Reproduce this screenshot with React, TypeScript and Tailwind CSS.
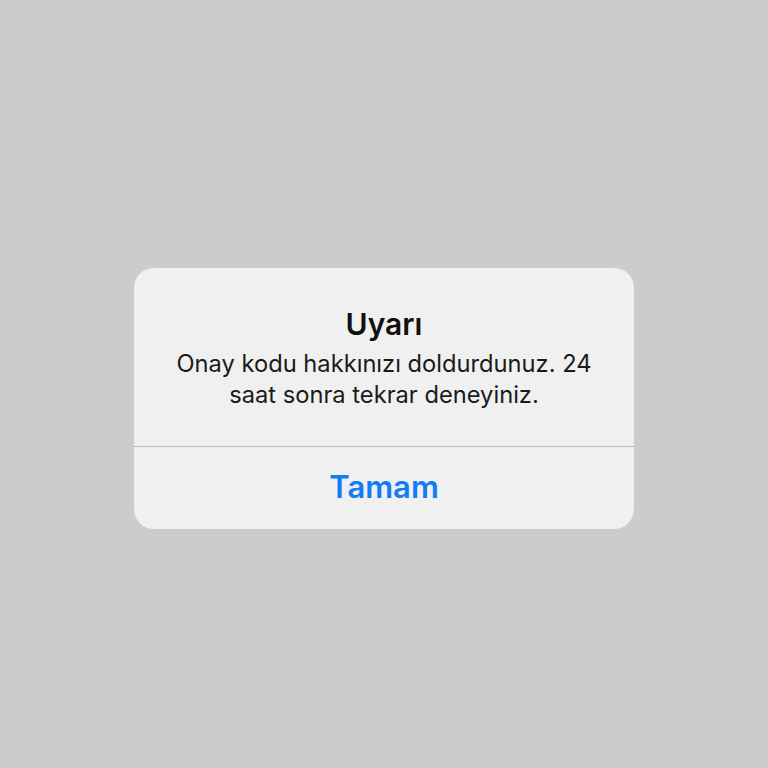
import React from "react";

const AlertDialog = ({
  title,
  message,
  action,
}: {
  title: string;
  message: string;
  action: string;
}) => {
  return (
    <div className="w-[500px] rounded-[20px] bg-[#f0f0f0] overflow-hidden">
      <div className="flex flex-col items-center px-10 pt-[38px] pb-[36px] text-center">
        <h2 className="text-[30px] leading-[36px] font-semibold text-[#111]">
          {title}
        </h2>
        <p className="mt-[6px] text-[23.7px] leading-[31px] text-[#1a1a1a]">
          {message}
        </p>
      </div>
      <div className="h-px bg-[#bdbdbd]" />
      <button className="w-full h-[82px] flex items-center justify-center text-[31px] font-semibold text-[#137cf5]">
        {action}
      </button>
    </div>
  );
};

export default function App() {
  return (
    <div
      className="w-full h-[768px] bg-[#cccccc] flex items-center justify-center pt-[28px]"
      style={{ fontFamily: "Inter, 'Noto Sans', sans-serif" }}
    >
      <AlertDialog
        title="Uyarı"
        message="Onay kodu hakkınızı doldurdunuz. 24 saat sonra tekrar deneyiniz."
        action="Tamam"
      />
    </div>
  );
}
